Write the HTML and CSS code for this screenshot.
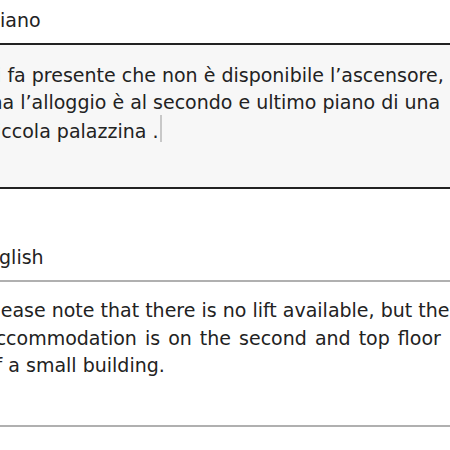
FILE: index.html
```html
<!DOCTYPE html>
<html lang="it">
<head>
<meta charset="utf-8">
<title>Traduzione</title>
<link rel="stylesheet" href="styles.css">
</head>
<body>
<main class="editor">
  <section class="lang">
    <div class="label label-it">Italiano</div>
    <div class="field field-active">
      <span class="line">Si fa presente che non è disponibile l’ascensore,</span>
      <span class="line">ma l’alloggio è al secondo e ultimo piano di una</span>
      <span class="line">piccola palazzina .<span class="caret"></span></span>
    </div>
  </section>
  <section class="lang lang-en">
    <div class="label label-en">English</div>
    <div class="field field-read">
      <span class="line">Please note that there is no lift available, but the</span>
      <span class="line line-wide">accommodation is on the second and top floor</span>
      <span class="line">of a small building.</span>
    </div>
  </section>
</main>
</body>
</html>
```

FILE: styles.css
```css
html, body {
  margin: 0;
  padding: 0;
  background: #ffffff;
  overflow: hidden;
}

body {
  width: 450px;
  height: 450px;
  color: #222222;
  font-family: "DejaVu Sans", sans-serif;
  font-size: 19px;
}

.editor {
  margin-left: -30px;
  width: 540px;
}

.label {
  line-height: 24px;
  white-space: nowrap;
}

.label-it {
  padding-top: 8px;
}

.lang-en {
  margin-top: 56px;
}

.label-en {
  margin-left: 5px;
}

.field {
  box-sizing: border-box;
  margin-top: 11px;
}

.field-active {
  height: 146px;
  border: 2px solid #222222;
  background: #f7f7f7;
  padding: 17px 0 0 12px;
}

.field-read {
  height: 147px;
  border-top: 2px solid #b0b0b0;
  border-bottom: 2px solid #b0b0b0;
  padding: 15px 0 0 14px;
}

.line {
  display: block;
  white-space: nowrap;
  line-height: 26.5px;
}

.field-read .line {
  line-height: 27.5px;
}

.line-wide {
  word-spacing: 2px;
}

.caret {
  display: inline-block;
  width: 2px;
  height: 27px;
  margin-left: 2px;
  vertical-align: -4px;
  background: #c8c8c8;
}
```
